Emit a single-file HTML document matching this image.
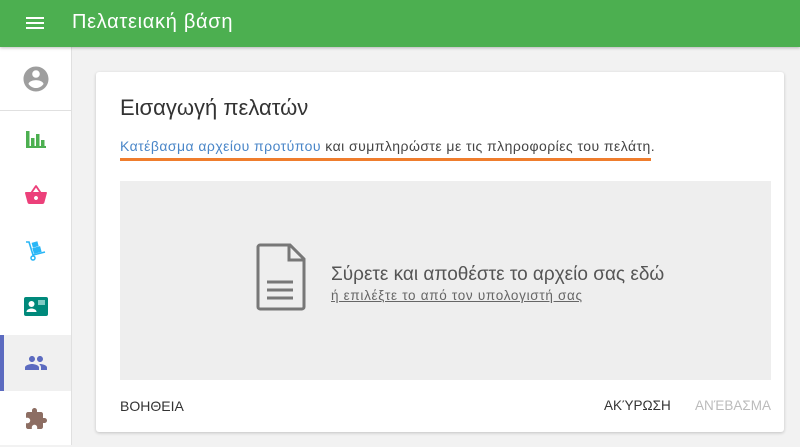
<!DOCTYPE html>
<html><head><meta charset="utf-8"><style>
*{margin:0;padding:0;box-sizing:border-box}
body{width:800px;height:445px;overflow:hidden;background:#f2f2f2;font-family:"Liberation Sans",sans-serif;position:relative}
.hdr{position:absolute;left:0;top:0;width:800px;height:47px;background:#4caf50;box-shadow:0 1px 3px rgba(0,0,0,.25);z-index:2}
.hdr .t{position:absolute;left:72px;top:11px;color:#fff;font-size:20px;letter-spacing:.7px}
.side{position:absolute;left:0;top:47px;width:72px;height:398px;background:#fff;border-right:1px solid #e0e0e0}
.it{position:absolute;left:0;width:71px;height:56px;display:flex;align-items:center;justify-content:center}
.card{position:absolute;left:96px;top:72px;width:688px;height:360px;background:#fff;border-radius:3px;box-shadow:0 1px 3px rgba(0,0,0,.2)}
</style></head><body>
<div class="hdr">
<svg style="position:absolute;left:25px;top:15px" width="20" height="16"><rect x="1" y="2" width="18" height="2" fill="#fff"/><rect x="1" y="7" width="18" height="2" fill="#fff"/><rect x="1" y="12" width="18" height="2" fill="#fff"/></svg>
<div class="t">Πελατειακή βάση</div></div>
<div class="side">
<svg style="position:absolute;left:21px;top:17px" width="30" height="30" viewBox="0 0 24 24"><path fill="#9e9e9e" d="M12 2C6.48 2 2 6.48 2 12s4.48 10 10 10 10-4.48 10-10S17.52 2 12 2zm0 3c1.66 0 3 1.34 3 3s-1.34 3-3 3-3-1.34-3-3 1.34-3 3-3zm0 14.2c-2.5 0-4.71-1.28-6-3.22.03-1.99 4-3.08 6-3.08 1.99 0 5.970 1.09 6 3.08-1.29 1.94-3.5 3.220-6 3.220z"/></svg>
<div style="position:absolute;left:0;top:63px;width:71px;height:1px;background:#e0e0e0"></div>
<div class="it" style="top:64px"><svg width="22" height="22" viewBox="0 0 22 22"><rect x="1" y="3" width="3.5" height="17" fill="#4caf50"/><rect x="6" y="10" width="3.5" height="10" fill="#4caf50"/><rect x="11" y="6" width="3.5" height="14" fill="#4caf50"/><rect x="16" y="12" width="3.5" height="8" fill="#4caf50"/><rect x="1" y="18" width="20" height="2" fill="#4caf50"/></svg></div>
<div class="it" style="top:120px"><svg width="24" height="24" viewBox="0 0 24 24"><path fill="#ec407a" d="M17.2 9l-4.4-6.5c-.2-.3-.5-.4-.8-.4s-.6.1-.8.4L6.8 9H2c-.6 0-1 .4-1 1l.04.3 2.5 9.3c.2.8 1 1.4 1.9 1.4h13c.9 0 1.7-.6 1.9-1.4l2.5-9.3L23 10c0-.6-.4-1-1-1h-4.8zM9 9l3-4.4L15 9H9zm3 8c-1.1 0-2-.9-2-2s.9-2 2-2 2 .9 2 2-.9 2-2 2z"/></svg></div>
<div class="it" style="top:176px"><svg width="24" height="24" viewBox="0 0 24 24"><path fill="none" stroke="#29b6f6" stroke-width="1.6" d="M2 3h3l4 13 12-3"/><circle cx="9" cy="19" r="2" fill="none" stroke="#29b6f6" stroke-width="1.5"/><rect x="9" y="8" width="8" height="6" fill="#29b6f6" transform="rotate(-15 13 11)"/><rect x="8" y="3" width="6" height="5" fill="#29b6f6" transform="rotate(-15 11 5)"/></svg></div>
<div class="it" style="top:232px"><svg width="24" height="20" viewBox="0 0 24 20"><rect x="0" y="0" width="24" height="19" rx="2" fill="#00897b"/><circle cx="7.5" cy="7" r="3" fill="#fff"/><path d="M2.5 15c0-2.5 3-3.5 5-3.5s5 1 5 3.5z" fill="#fff"/><rect x="14" y="3" width="7" height="5" fill="#80cbc4"/></svg></div>
<div class="it" style="top:288px;background:#f0f0f0"><div style="position:absolute;left:0;top:0;width:4px;height:56px;background:#5c6bc0"></div><svg width="24" height="24" viewBox="0 0 24 24"><path fill="#5c6bc0" d="M16 11c1.66 0 2.99-1.34 2.99-3S17.66 5 16 5c-1.66 0-3 1.34-3 3s1.34 3 3 3zm-8 0c1.66 0 2.99-1.34 2.99-3S9.66 5 8 5C6.34 5 5 6.34 5 8s1.34 3 3 3zm0 2c-2.33 0-7 1.17-7 3.5V19h14v-2.5c0-2.33-4.67-3.5-7-3.5zm8 0c-.29 0-.62.02-.97.05 1.16.84 1.970 1.970 1.970 3.45V19h6v-2.5c0-2.33-4.67-3.5-7-3.5z"/></svg></div>
<div class="it" style="top:344px"><svg width="24" height="24" viewBox="0 0 24 24"><path fill="#8d6e63" d="M20.5 11H19V7c0-1.1-.9-2-2-2h-4V3.5C13 2.12 11.88 1 10.5 1S8 2.12 8 3.5V5H4c-1.1 0-1.99.9-1.99 2v3.8H3.5c1.49 0 2.7 1.21 2.7 2.7s-1.21 2.7-2.7 2.7H2V20c0 1.1.9 2 2 2h3.8v-1.5c0-1.49 1.21-2.7 2.7-2.7 1.49 0 2.7 1.21 2.7 2.7V22H17c1.1 0 2-.9 2-2v-4h1.5c1.38 0 2.5-1.12 2.5-2.5S21.880 11 20.5 11z"/></svg></div>
</div>
<div class="card">
<div style="position:absolute;left:24px;top:23px;font-size:22px;color:#333">Εισαγωγή πελατών</div>
<div style="position:absolute;left:24px;top:66px;font-size:14px;letter-spacing:.45px;color:#444;white-space:nowrap"><span style="color:#4a86c8">Κατέβασμα αρχείου προτύπου</span> και συμπληρώστε με τις πληροφορίες του πελάτη.</div>
<div style="position:absolute;left:24px;top:86px;width:531px;height:3px;background:#ef7d2d"></div>
<div style="position:absolute;left:24px;top:109px;width:651px;height:199px;background:#eeeeee">
<svg style="position:absolute;left:136px;top:62px" width="52" height="68" viewBox="0 0 52 68"><path d="M4 2h30l14 14v48c0 1-1 2-2 2H4c-1 0-2-1-2-2V4c0-1 1-2 2-2z M33 2v15h15" fill="none" stroke="#777" stroke-width="3"/><path d="M11 39h26M11 47h26M11 55h26" stroke="#777" stroke-width="3"/></svg>
<div style="position:absolute;left:211px;top:83px;font-size:19px;color:#555;white-space:nowrap">Σύρετε και αποθέστε το αρχείο σας εδώ</div>
<div style="position:absolute;left:211px;top:107px;font-size:13.5px;letter-spacing:.7px;color:#666;text-decoration:underline;white-space:nowrap">ή επιλέξτε το από τον υπολογιστή σας</div>
</div>
<div style="position:absolute;left:24px;top:326px;font-size:14px;color:#333">ΒΟΗΘΕΙΑ</div>
<div style="position:absolute;left:508px;top:326px;font-size:13.5px;color:#333">ΑΚΎΡΩΣΗ</div>
<div style="position:absolute;left:599px;top:326px;font-size:13.5px;color:#bbb">ΑΝΈΒΑΣΜΑ</div>
</div>
</body></html>
